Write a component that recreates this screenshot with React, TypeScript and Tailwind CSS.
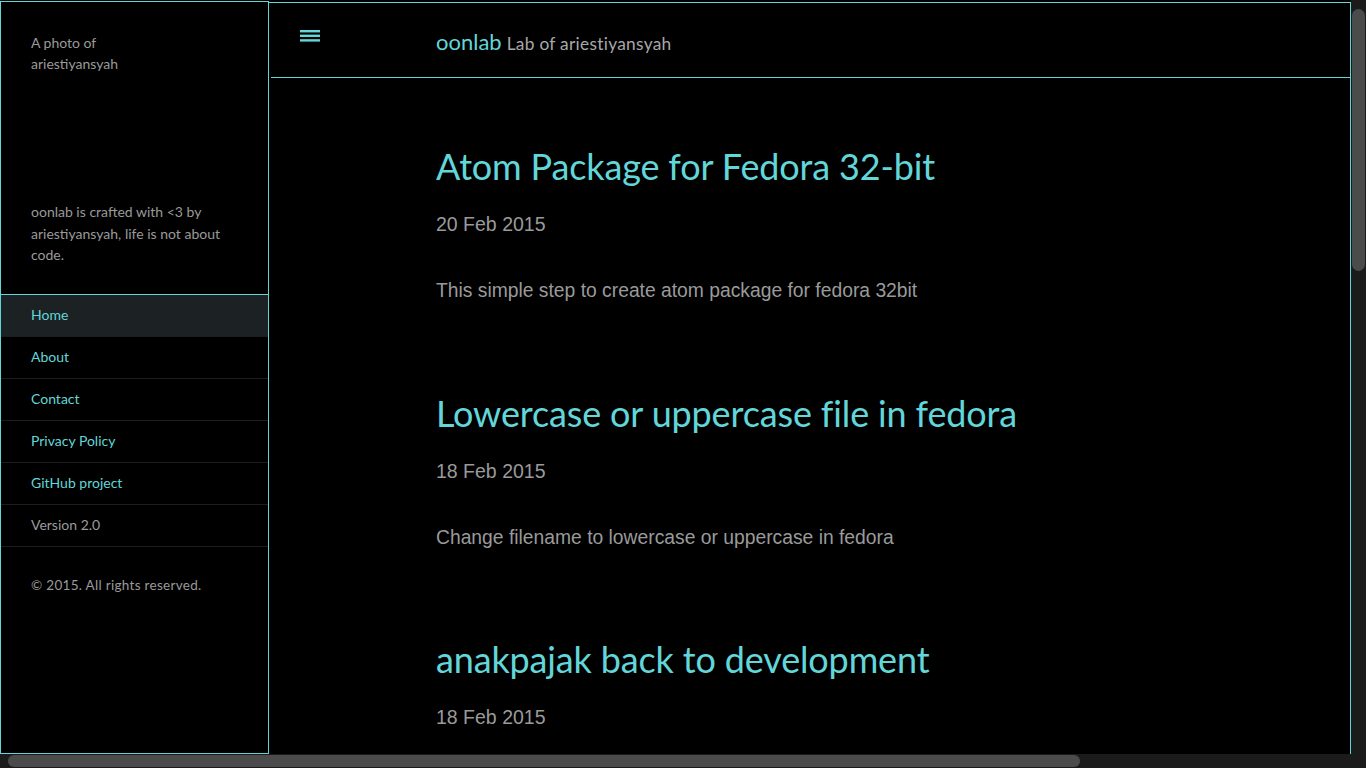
import React from 'react'

const NAV = [
  { label: 'Home', active: true, link: true },
  { label: 'About', link: true },
  { label: 'Contact', link: true },
  { label: 'Privacy Policy', link: true },
  { label: 'GitHub project', link: true },
  { label: 'Version 2.0', link: false },
]

const POSTS: { title: string; date: string; excerpt?: string }[] = [
  { title: 'Atom Package for Fedora 32-bit', date: '20 Feb 2015', excerpt: 'This simple step to create atom package for fedora 32bit' },
  { title: 'Lowercase or uppercase file in fedora', date: '18 Feb 2015', excerpt: 'Change filename to lowercase or uppercase in fedora' },
  { title: 'anakpajak back to development', date: '18 Feb 2015' },
]

const sans = "font-['Lato','Noto_Sans',sans-serif]"
const arial = "font-['Liberation_Sans',Arial,sans-serif]"

function Burger() {
  return (
    <svg width="20" height="13" viewBox="0 0 20 13" className="block">
      <rect x="0" y="0" width="20" height="2.4" fill="#62d6d9" />
      <rect x="0" y="4.6" width="20" height="2.4" fill="#62d6d9" />
      <rect x="0" y="9.2" width="20" height="2.4" fill="#62d6d9" />
    </svg>
  )
}

export default function App() {
  return (
    <div className="h-screen w-screen flex flex-col bg-black overflow-hidden">
      <div className="flex flex-1 min-h-0">
        {/* page viewport */}
        <div className="flex-1 min-w-0 overflow-hidden">
          <div className={`flex w-[1690px] pt-[1px] ${sans}`}>
            {/* Sidebar */}
            <aside className="w-[269px] h-[753px] shrink-0 border border-[#62d6d9] bg-black flex flex-col">
              <div className="px-[30px] pt-[30px] text-[14px] leading-[21px] text-[#9a9a9a] h-[162px]">
                <p>A photo of<br />ariestiyansyah</p>
              </div>
              <div className="px-[30px] pt-[37px] text-[14px] leading-[21.5px] text-[#9a9a9a] h-[130px]">
                <p>oonlab is crafted with &lt;3 by ariestiyansyah, life is not about code.</p>
              </div>
              <ul className="border-t border-[#62d6d9]">
                {NAV.map(n => (
                  <li
                    key={n.label}
                    className={`h-[42px] flex items-center pl-[30px] pb-[2px] text-[14px] border-b border-[#1d1d1d] ${n.active ? 'bg-[#1c2124]' : ''} ${n.link ? 'text-[#62d6d9]' : 'text-[#9a9a9a]'}`}
                  >
                    {n.label}
                  </li>
                ))}
              </ul>
              <p className="px-[30px] pt-[28px] text-[13.5px] tracking-[0.3px] text-[#9a9a9a]">© 2015. All rights reserved.</p>
            </aside>

            {/* Main */}
            <main className="w-[1082px] h-[2160px] shrink-0 mt-[1px] border-t border-r border-[#62d6d9] bg-black">
              <header className="ml-[2px] h-[75px] border-b border-[#62d6d9] flex">
                <div className="w-[165px] pl-[29px] pt-[27px]">
                  <Burger />
                </div>
                <div className="pt-[22px] flex items-baseline gap-[5px]">
                  <span className="text-[22px] text-[#62d6d9]">oonlab</span>
                  <span className="text-[17.3px] text-[#a8a8a8] tracking-[0.3px]">Lab of ariestiyansyah</span>
                </div>
              </header>

              <div className="ml-[167px] w-[748px] pt-[64px]">
                {POSTS.map(p => (
                  <article key={p.title} className="h-[246.5px]">
                    <h2 className="text-[36px] leading-[48px] text-[#62d6d9] tracking-[-0.15px]">{p.title}</h2>
                    <p className={`mt-[22px] text-[19.5px] leading-[24px] text-[#9a9a9a] ${arial}`}>{p.date}</p>
                    {p.excerpt && (
                      <p className={`mt-[43px] text-[19.3px] leading-[24px] text-[#9a9a9a] ${arial}`}>{p.excerpt}</p>
                    )}
                  </article>
                ))}
              </div>
            </main>
          </div>
        </div>

        {/* vertical scrollbar */}
        <div className="w-[15px] shrink-0 bg-[#1b1b1b] pt-[9px] pl-[1px]">
          <div className="h-[262px] w-[13px] rounded-full bg-[#4b4b4b]" />
        </div>
      </div>

      {/* horizontal scrollbar */}
      <div className="h-[14px] shrink-0 bg-[#1b1b1b] flex">
        <div className="flex-1 pl-[8px] pt-[1px]">
          <div className="w-[1072px] h-[12px] rounded-full bg-[#4b4b4b]" />
        </div>
        <div className="w-[15px]" />
      </div>
    </div>
  )
}
